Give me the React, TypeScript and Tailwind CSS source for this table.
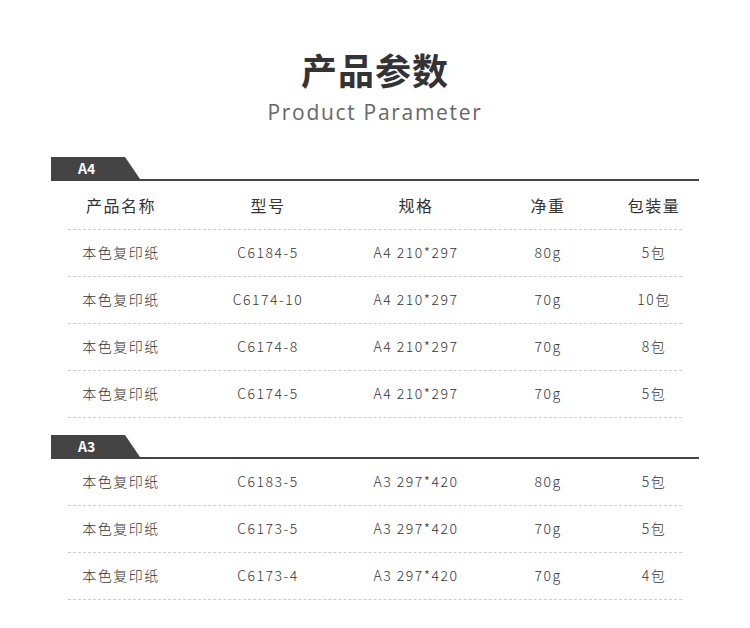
const a4Rows = [
  { name: "本色复印纸", model: "C6184-5", spec: "A4 210*297", weight: "80g", pack: "5包" },
  { name: "本色复印纸", model: "C6174-10", spec: "A4 210*297", weight: "70g", pack: "10包" },
  { name: "本色复印纸", model: "C6174-8", spec: "A4 210*297", weight: "70g", pack: "8包" },
  { name: "本色复印纸", model: "C6174-5", spec: "A4 210*297", weight: "70g", pack: "5包" },
];

const a3Rows = [
  { name: "本色复印纸", model: "C6183-5", spec: "A3 297*420", weight: "80g", pack: "5包" },
  { name: "本色复印纸", model: "C6173-5", spec: "A3 297*420", weight: "70g", pack: "5包" },
  { name: "本色复印纸", model: "C6173-4", spec: "A3 297*420", weight: "70g", pack: "4包" },
];

type Row = (typeof a4Rows)[number];

const cols = "grid grid-cols-[106px_188px_108px_156px_1fr] items-center text-center";

const SectionTab = ({ label }: { label: string }) => (
  <div className="border-b-2 border-[#444]">
    <div className="flex h-[22px] w-[89px] items-center bg-[#444] pl-[27px] text-[14px] font-bold leading-none text-white [clip-path:polygon(0_0,74px_0,89px_100%,0_100%)]">
      {label}
    </div>
  </div>
);

const DataRow = ({ row }: { row: Row }) => (
  <div className={`${cols} h-[47px] border-b border-dashed border-[#ccc] pb-[1px] text-[14px] font-light tracking-[1.5px] text-[#333]`}>
    <span>{row.name}</span>
    <span>{row.model}</span>
    <span>{row.spec}</span>
    <span>{row.weight}</span>
    <span>{row.pack}</span>
  </div>
);

const App = () => {
  return (
    <main className="h-[628px] w-[750px] bg-white font-['Noto_Sans_CJK_SC','Noto_Sans',sans-serif]">
      <div className="pt-[47px] text-center">
        <h1 className="h-[44px] text-[36px] font-bold leading-[44px] tracking-[1px] text-[#333]">
          产品参数
        </h1>
        <p className="mt-[6px] h-[30px] font-['Open_Sans',sans-serif] text-[21px] leading-[30px] tracking-[1.7px] text-[#666]">
          Product Parameter
        </p>
      </div>

      <section className="mx-[51px] mt-[30px]">
        <SectionTab label="A4" />
        <div className="mx-[17px]">
          <div className={`${cols} h-[49px] border-b border-dashed border-[#ccc] pb-[1px] text-[16px] tracking-[1.5px] text-[#333]`}>
            <span>产品名称</span>
            <span>型号</span>
            <span>规格</span>
            <span>净重</span>
            <span>包装量</span>
          </div>
          {a4Rows.map((row) => (
            <DataRow key={row.model} row={row} />
          ))}
        </div>
      </section>

      <section className="mx-[51px] mt-[17px]">
        <SectionTab label="A3" />
        <div className="mx-[17px]">
          {a3Rows.map((row) => (
            <DataRow key={row.model} row={row} />
          ))}
        </div>
      </section>
    </main>
  );
};

export default App;
